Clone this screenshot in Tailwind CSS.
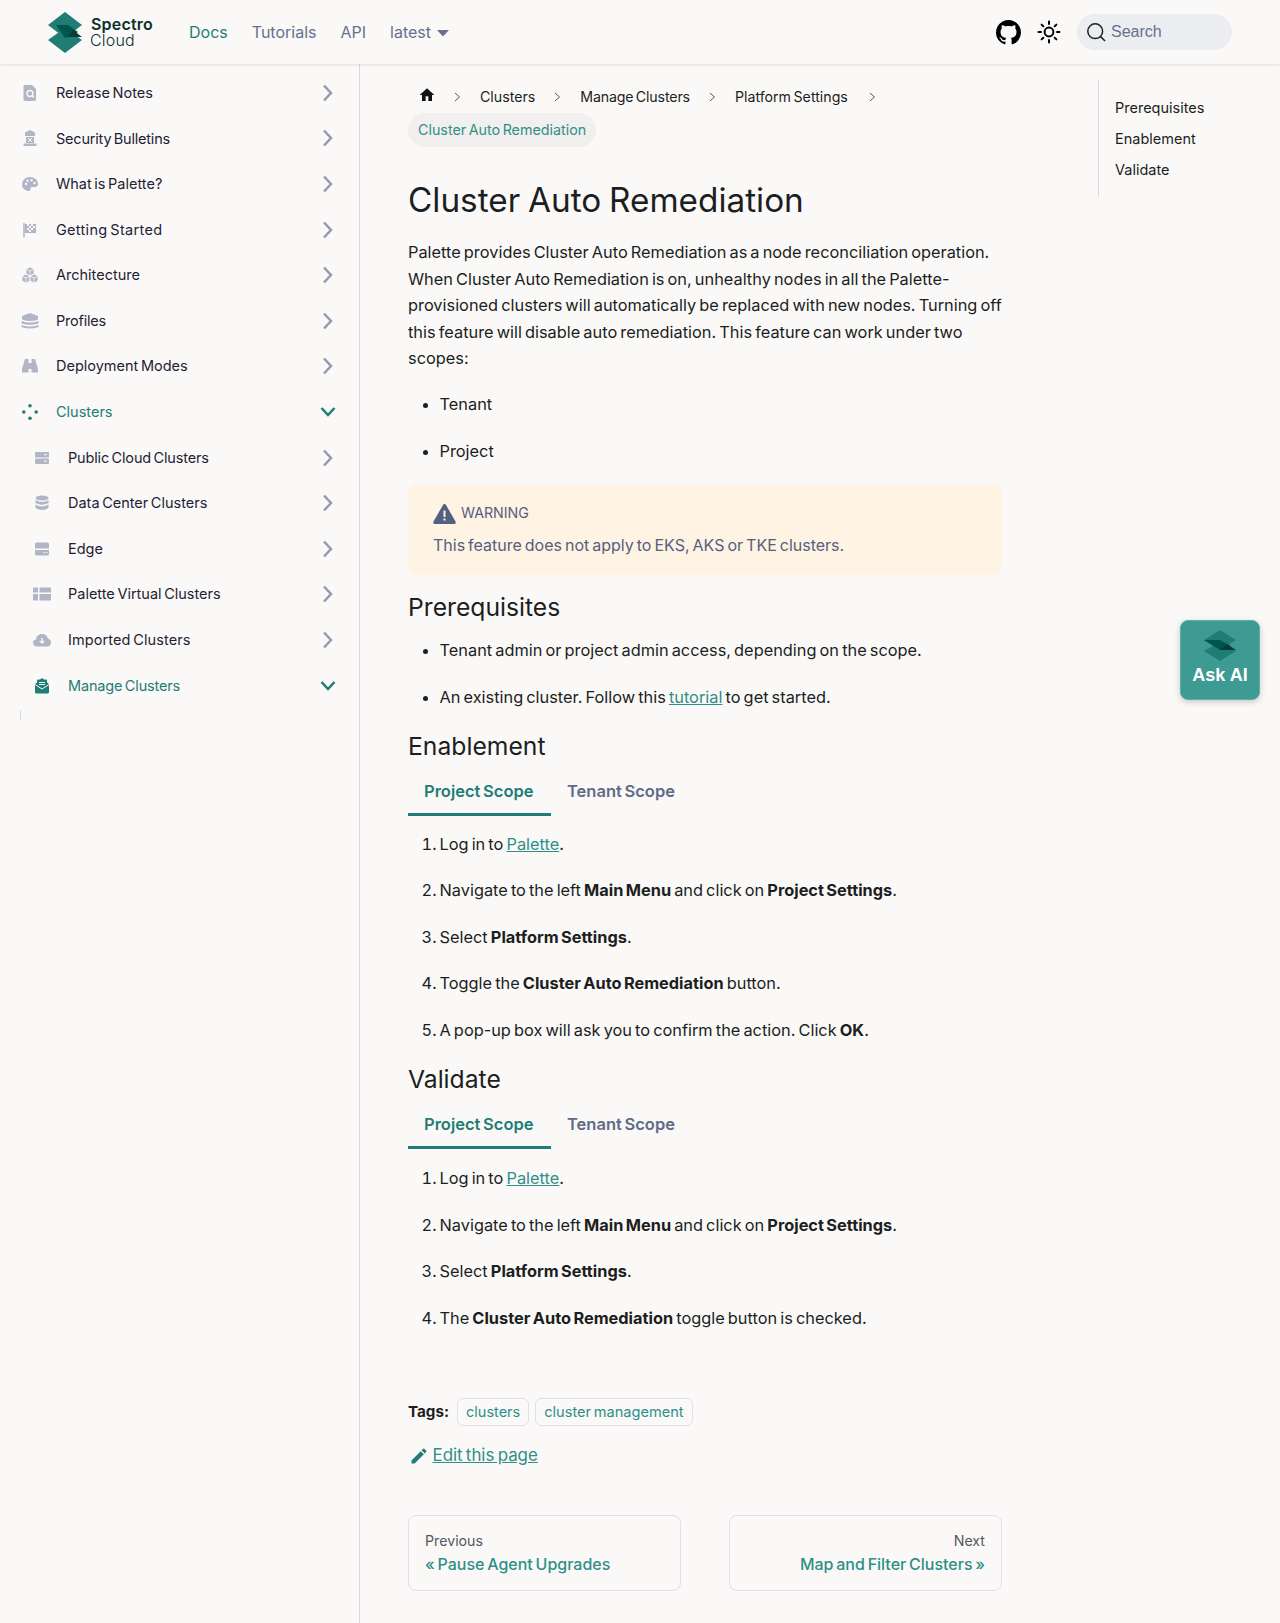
<!DOCTYPE html>
<html lang="en">
<head>
  <meta charset="UTF-8">
  <title>Cluster Auto Remediation | Palette</title>
  <script src="https://cdn.jsdelivr.net/npm/@tailwindcss/browser@4"></script>
</head>
<body class="bg-[#faf9f8] font-['Inter',sans-serif] text-[#1c1e21] h-[1623px] overflow-hidden relative">
  <!-- navbar -->
  <header class="h-[64px] flex items-center pl-[48px] pr-[48px] shadow-[0_1px_3px_rgba(0,0,0,0.1)] relative z-10">
    <svg width="34" height="41" viewBox="0 0 34 41" class="shrink-0">
      <path d="M17 16 34 28 17 41 0 28Z" fill="#1f7d75"/>
      <path d="M17 0 34 13 17 26 0 13Z" fill="#1f7d75"/>
      <path d="M8 13H20L30 20 24 24 17 26Z" fill="#00564f"/>
      <path d="M25 18 34 25 20 25Z" fill="#0b3b38"/>
    </svg>
    <div class="ml-[9px] flex flex-col text-[16px] leading-[16px] text-[#0d2f2d] w-[64px] tracking-[0.2px]">
      <span class="font-semibold">Spectro</span>
      <span class="ml-[-1px] font-light">Cloud</span>
    </div>
    <nav class="flex items-center text-[16px] text-[#67708f] ml-[34px] gap-[24px]">
      <a class="text-[#1f7d75]">Docs</a>
      <a>Tutorials</a>
      <a>API</a>
      <a class="flex items-center gap-[6px]">latest
        <svg width="12" height="7" viewBox="0 0 12 7" class="mt-[2px]"><path d="M0 0H12L6 6.5Z" fill="#67708f"/></svg>
      </a>
    </nav>
    <div class="ml-auto flex items-center">
      <svg width="25" height="25" viewBox="0 0 16 16" fill="#000"><path d="M8 0C3.58 0 0 3.58 0 8c0 3.54 2.29 6.53 5.47 7.59.4.07.55-.17.55-.38 0-.19-.01-.82-.01-1.49-2.01.37-2.53-.49-2.69-.94-.09-.23-.48-.94-.82-1.13-.28-.15-.68-.52-.01-.53.63-.01 1.08.58 1.23.82.72 1.21 1.87.87 2.33.66.07-.52.28-.87.51-1.07-1.78-.2-3.64-.89-3.64-3.95 0-.87.31-1.59.82-2.15-.08-.2-.36-1.02.08-2.12 0 0 .67-.21 2.2.82.64-.18 1.32-.27 2-.27s1.36.09 2 .27c1.53-1.04 2.2-.82 2.2-.82.44 1.1.16 1.92.08 2.12.51.56.82 1.27.82 2.15 0 3.07-1.87 3.75-3.65 3.95.29.25.54.73.54 1.48 0 1.07-.01 1.93-.01 2.2 0 .21.15.46.55.38A8.01 8.01 0 0 0 16 8c0-4.42-3.58-8-8-8Z"/></svg>
      <svg width="24" height="24" viewBox="0 0 24 24" fill="none" stroke="#000" stroke-width="2" stroke-linecap="round" class="ml-[16px]"><circle cx="12" cy="12" r="4.4"/><path d="M12 1.5v2.5M12 20v2.5M1.5 12H4M20 12h2.5M4.600 4.600l1.700 1.700M17.700 17.700l1.700 1.700M4.600 19.400l1.700-1.700M17.700 6.300l1.700-1.700"/></svg>
      <div class="ml-[16px] w-[155px] h-[36px] rounded-full bg-[#ebedf1] flex items-center pl-[9px] gap-[5px] font-['Liberation_Sans',sans-serif] text-[16px] text-[#67708f]">
        <svg width="20" height="20" viewBox="0 0 20 20" fill="none" stroke="#1c1e21" stroke-width="1.5"><circle cx="9.2" cy="9.2" r="7.4"/><path d="M14.6 14.6 19 19"/></svg>
        Search
      </div>
    </div>
  </header>

  <div class="flex h-[1559px]">
    <!-- sidebar -->
    <aside class="w-[360px] shrink-0 border-r border-[#d6d8e2] pt-[6px] text-[14.5px] text-[#1f2233] [word-spacing:-1.5px]">
      <ul class="flex flex-col">
        <li class="h-[45.6px] flex items-center pl-[22px] pr-[26px]">
          <svg class="w-[16px] h-[16px] mr-[18px] shrink-0" viewBox="0 0 16 16" fill="#b1b5c6"><path d="M3 0H10L14 4V14.500Q14 16 12.500 16H3Q1.500 16 1.500 14.500V1.500Q1.500 0 3 0Z"/><circle cx="8" cy="8.500" r="3" fill="none" stroke="#faf9f8" stroke-width="1.400"/><path d="M10 10.500 12 12.500" stroke="#faf9f8" stroke-width="1.400"/></svg>
          <span class="flex-1">Release Notes</span>
          <svg width="11" height="18" viewBox="0 0 11 18" fill="none" stroke="#9599ae" stroke-width="2.500"><path d="M2 1.500 9 9 2 16.500"/></svg>
        </li>
        <li class="h-[45.6px] flex items-center pl-[22px] pr-[26px]">
          <svg class="w-[16px] h-[16px] mr-[18px] shrink-0" viewBox="0 0 16 16" fill="#b1b5c6"><path d="M8 0 13 2.500V6H3V2.500ZM4 7H12V13H4ZM1.500 13.500H14.500V16H1.500Z"/><path d="M6 8 10 12M10 8 6 12" stroke="#faf9f8"/></svg>
          <span class="flex-1 tracking-[-0.2px]">Security Bulletins</span>
          <svg width="11" height="18" viewBox="0 0 11 18" fill="none" stroke="#9599ae" stroke-width="2.500"><path d="M2 1.500 9 9 2 16.500"/></svg>
        </li>
        <li class="h-[45.6px] flex items-center pl-[22px] pr-[26px]">
          <svg class="w-[16px] h-[16px] mr-[18px] shrink-0" viewBox="0 0 16 16" fill="#b1b5c6"><path d="M8 1C3.500 1 0 4.500 0 8.500 0 12.500 3.500 15 7 15 9 15 8 13 8.500 12 9 10.500 11 11 13 11 15 11 16 9.500 16 8 16 4 12.500 1 8 1Z"/><circle cx="4" cy="8" r="1.200" fill="#faf9f8"/><circle cx="5.500" cy="4.800" r="1.200" fill="#faf9f8"/><circle cx="9.500" cy="4.200" r="1.200" fill="#faf9f8"/><circle cx="12.500" cy="7" r="1.200" fill="#faf9f8"/></svg>
          <span class="flex-1">What is Palette?</span>
          <svg width="11" height="18" viewBox="0 0 11 18" fill="none" stroke="#9599ae" stroke-width="2.500"><path d="M2 1.500 9 9 2 16.500"/></svg>
        </li>
        <li class="h-[45.6px] flex items-center pl-[22px] pr-[26px]">
          <svg class="w-[16px] h-[16px] mr-[18px] shrink-0" viewBox="0 0 16 16"><path d="M2 1V15.500" stroke="#b1b5c6" stroke-width="1.500"/><path d="M3 2H14V11H3Z" fill="#b1b5c6"/><path d="M5 2H7V4H5ZM9 2H11V4H9ZM7 4H9V6H7ZM11 4H13V6H11ZM5 6H7V8H5ZM9 6H11V8H9ZM7 8H9V10H7Z" fill="#faf9f8"/></svg>
          <span class="flex-1 tracking-[0.3px]">Getting Started</span>
          <svg width="11" height="18" viewBox="0 0 11 18" fill="none" stroke="#9599ae" stroke-width="2.500"><path d="M2 1.500 9 9 2 16.500"/></svg>
        </li>
        <li class="h-[45.6px] flex items-center pl-[22px] pr-[26px]">
          <svg class="w-[16px] h-[16px] mr-[18px] shrink-0" viewBox="0 0 16 16" fill="#b1b5c6" stroke="#faf9f8" stroke-width="0.800"><path d="M8 0 12 2V7L8 9 4 7V2ZM4 7 8 9V14L4 16 0 14V9ZM12 7 16 9V14L12 16 8 14V9Z"/><path d="M4 2 8 4 12 2M8 4V9M0 9 4 11 8 9M4 11V16M8 9 12 11 16 9M12 11V16" fill="none"/></svg>
          <span class="flex-1">Architecture</span>
          <svg width="11" height="18" viewBox="0 0 11 18" fill="none" stroke="#9599ae" stroke-width="2.500"><path d="M2 1.500 9 9 2 16.500"/></svg>
        </li>
        <li class="h-[45.6px] flex items-center pl-[22px] pr-[26px]">
          <svg class="w-[16px] h-[16px] mr-[18px] shrink-0 overflow-visible" viewBox="0 0 16 16" fill="#b1b5c6"><path d="M8 0 16 3V6.500Q8 9.500 0 6.500V3Z"/><path d="M-.5 8Q8 11 16.500 8V10.500Q8 13 -.5 10.500ZM-.5 12Q8 15 16.500 12V14Q8 17 -.5 14Z"/></svg>
          <span class="flex-1 tracking-[-0.2px]">Profiles</span>
          <svg width="11" height="18" viewBox="0 0 11 18" fill="none" stroke="#9599ae" stroke-width="2.500"><path d="M2 1.500 9 9 2 16.500"/></svg>
        </li>
        <li class="h-[45.6px] flex items-center pl-[22px] pr-[26px]">
          <svg class="w-[16px] h-[16px] mr-[18px] shrink-0" viewBox="0 0 16 16" fill="#b1b5c6"><path d="M3 1H6.500V5H9.500V1H13L16 11V14.500H9.500V11H6.500V14.500H0V11Z"/></svg>
          <span class="flex-1">Deployment Modes</span>
          <svg width="11" height="18" viewBox="0 0 11 18" fill="none" stroke="#9599ae" stroke-width="2.500"><path d="M2 1.500 9 9 2 16.500"/></svg>
        </li>
        <li class="h-[45.6px] flex items-center pl-[22px] pr-[26px] text-[#1f7d75]">
          <svg class="w-[16px] h-[16px] mr-[18px] shrink-0" viewBox="0 0 16 16" fill="#1f7d75"><circle cx="8" cy="1.800" r="1.800"/><circle cx="1.800" cy="8" r="1.800"/><circle cx="14.200" cy="8" r="1.800"/><circle cx="8" cy="14.200" r="1.800"/></svg>
          <span class="flex-1">Clusters</span>
          <svg class="mr-[-3px]" width="16" height="11" viewBox="0 0 16 11" fill="none" stroke="#1f7d75" stroke-width="2.500"><path d="M1.500 2 8 9 14.500 2"/></svg>
        </li>
        <li class="h-[45.6px] flex items-center pl-[34px] pr-[26px]">
          <svg class="w-[16px] h-[16px] mr-[18px] shrink-0" viewBox="0 0 16 16" fill="#b1b5c6"><rect x="1" y="2" width="14" height="5.500" rx="1.200"/><rect x="1" y="8.500" width="14" height="5.500" rx="1.200"/><path d="M10 4.700h3M10 11.200h3" stroke="#faf9f8"/></svg>
          <span class="flex-1 tracking-[-0.15px]">Public Cloud Clusters</span>
          <svg width="11" height="18" viewBox="0 0 11 18" fill="none" stroke="#9599ae" stroke-width="2.500"><path d="M2 1.500 9 9 2 16.500"/></svg>
        </li>
        <li class="h-[45.6px] flex items-center pl-[34px] pr-[26px]">
          <svg class="w-[16px] h-[16px] mr-[18px] shrink-0" viewBox="0 0 16 16" fill="#b1b5c6"><ellipse cx="8" cy="3" rx="6.500" ry="2.500"/><path d="M1.500 5Q8 9 14.500 5V8Q8 11.500 1.500 8ZM1.500 9.500Q8 13.500 14.500 9.500V13Q8 17 1.500 13Z"/></svg>
          <span class="flex-1">Data Center Clusters</span>
          <svg width="11" height="18" viewBox="0 0 11 18" fill="none" stroke="#9599ae" stroke-width="2.500"><path d="M2 1.500 9 9 2 16.500"/></svg>
        </li>
        <li class="h-[45.6px] flex items-center pl-[34px] pr-[26px]">
          <svg class="w-[16px] h-[16px] mr-[18px] shrink-0" viewBox="0 0 16 16" fill="#b1b5c6"><path d="M2.500 1.500H13.500Q15 1.500 15 3V7.500H1V3Q1 1.500 2.500 1.500ZM1 9H15V13Q15 14.500 13.500 14.500H2.500Q1 14.500 1 13Z"/><path d="M9.500 11.500h1.500M12 11.500h1.500" stroke="#faf9f8"/></svg>
          <span class="flex-1">Edge</span>
          <svg width="11" height="18" viewBox="0 0 11 18" fill="none" stroke="#9599ae" stroke-width="2.500"><path d="M2 1.500 9 9 2 16.500"/></svg>
        </li>
        <li class="h-[45.6px] flex items-center pl-[34px] pr-[26px]">
          <svg class="w-[18px] h-[16px] ml-[-1px] mr-[17px] shrink-0" viewBox="0 0 18 16" fill="#b1b5c6"><path d="M0 1.500H5V6.500H0ZM6.500 1.500H18V6.500H6.500ZM0 8H5V14.500H0ZM6.500 8H18V14.500H6.500Z"/></svg>
          <span class="flex-1">Palette Virtual Clusters</span>
          <svg width="11" height="18" viewBox="0 0 11 18" fill="none" stroke="#9599ae" stroke-width="2.500"><path d="M2 1.500 9 9 2 16.500"/></svg>
        </li>
        <li class="h-[45.6px] flex items-center pl-[34px] pr-[26px]">
          <svg class="w-[18px] h-[16px] ml-[-1px] mr-[17px] shrink-0" viewBox="0 0 18 16" fill="#b1b5c6"><path d="M4 14.500Q0 14.500 0 10.800 0 8 3 7.500 3.500 2 9.500 2 13.500 2 15 6.500 18 7.500 18 10.500 18 14.500 14 14.500Z"/><path d="M9 6V11M6.800 9 9 11.200 11.200 9" fill="none" stroke="#faf9f8" stroke-width="1.300"/></svg>
          <span class="flex-1 tracking-[0.1px]">Imported Clusters</span>
          <svg width="11" height="18" viewBox="0 0 11 18" fill="none" stroke="#9599ae" stroke-width="2.500"><path d="M2 1.500 9 9 2 16.500"/></svg>
        </li>
        <li class="h-[45.6px] flex items-center pl-[34px] pr-[26px] text-[#1f7d75]">
          <svg class="w-[16px] h-[16px] mr-[18px] shrink-0" viewBox="0 0 16 16" fill="#1f7d75"><path d="M1 6 3 4.500V2.500Q3 1.500 4 1.500H6L8 0 10 1.500H12Q13 1.500 13 2.500V4.500L15 6V14Q15 15.500 13.500 15.500H2.500Q1 15.500 1 14Z"/><path d="M1 6.500 8 11 15 6.500" fill="none" stroke="#faf9f8"/><path d="M5 4.500h6M5 6.500h6" stroke="#faf9f8"/></svg>
          <span class="flex-1 tracking-[-0.15px]">Manage Clusters</span>
          <svg class="mr-[-3px]" width="16" height="11" viewBox="0 0 16 11" fill="none" stroke="#1f7d75" stroke-width="2.500"><path d="M1.500 2 8 9 14.500 2"/></svg>
        </li>
      </ul>
      <div class="ml-[20px] mt-[2px] w-px h-[10px] bg-[#d6d8e2]"></div>
    </aside>

    <!-- article -->
    <main class="w-[594px] ml-[48px] shrink-0 text-[16.35px] leading-[26.6px] [word-spacing:-1.5px]">
      <nav class="pt-[18px] flex flex-wrap items-center text-[14.2px] leading-[30px]">
        <svg width="16" height="16" viewBox="0 0 24 24" fill="#111" class="ml-[11px] mb-[4px]"><path d="M10 21v-7h4v7h5.500v-9H23L12 2 1 12h3.500v9Z"/></svg>
        <svg width="7" height="10" viewBox="0 0 7 10" fill="none" stroke="#555" class="ml-[19px]"><path d="M1 1 5.500 5 1 9"/></svg>
        <span class="ml-[19px]">Clusters</span>
        <svg width="7" height="10" viewBox="0 0 7 10" fill="none" stroke="#555" class="ml-[19px]"><path d="M1 1 5.500 5 1 9"/></svg>
        <span class="ml-[19px] tracking-[-0.15px]">Manage Clusters</span>
        <svg width="7" height="10" viewBox="0 0 7 10" fill="none" stroke="#555" class="ml-[19px]"><path d="M1 1 5.500 5 1 9"/></svg>
        <span class="ml-[19px]">Platform Settings</span>
        <svg width="7" height="10" viewBox="0 0 7 10" fill="none" stroke="#555" class="ml-[21px]"><path d="M1 1 5.500 5 1 9"/></svg>
      </nav>
      <div class="mt-[1px] inline-block h-[34px] leading-[34px] px-[10px] rounded-full bg-[#f2f0ee] text-[#2f8f88] text-[14.3px]">Cluster Auto Remediation</div>

      <h1 class="mt-[31px] text-[33.3px] leading-[44px] text-[#1c1e21]">Cluster Auto Remediation</h1>
      <p class="mt-[17px]">Palette provides Cluster Auto Remediation as a node reconciliation operation. When Cluster Auto Remediation is on, unhealthy nodes in all the Palette-provisioned clusters will automatically be replaced with new nodes. Turning off this feature will disable auto remediation. This feature can work under two scopes:</p>
      <ul class="list-disc pl-[31.5px] mt-[19px]">
        <li>Tenant</li>
        <li class="mt-[20.4px]">Project</li>
      </ul>
      <div class="mt-[19px] h-[91px] rounded-[8px] bg-[#fff3e3] pl-[25px] pt-[18px] text-[#54607f] text-[16px]">
        <div class="flex items-center text-[14.200px] h-[24px]">
          <svg width="23" height="20" viewBox="0 0 23 20" fill="#54607f" class="mr-[5px]"><path d="M11.500 0Q12.500 0 13 1L22.500 17.500Q23.500 20 21 20H2Q-.5 20 .5 17.500L10 1Q10.500 0 11.500 0Z"/><path d="M10.500 6.500H12.500V13H10.500ZM10.500 14.500H12.500V16.500H10.500Z" fill="#fff3e3"/></svg>
          WARNING
        </div>
        <p class="mt-[6px]">This feature does not apply to EKS, AKS or TKE clusters.</p>
      </div>
      <h2 class="mt-[16px] text-[24.700px] leading-[32px]">Prerequisites</h2>
      <ul class="list-disc pl-[31.5px] mt-[14px]">
        <li>Tenant admin or project admin access, depending on the scope.</li>
        <li class="mt-[20.4px]">An existing cluster. Follow this <a class="text-[#2f8f88] underline">tutorial</a> to get started.</li>
      </ul>
      <h2 class="mt-[19.5px] text-[24.700px] leading-[32px]">Enablement</h2>
      <div class="mt-[6px] flex font-semibold text-[#606b85] text-[16.500px] h-[48px]">
        <div class="px-[16px] w-[143px] leading-[46px] border-b-[3px] border-[#1f7d75] text-[#1f7d75]">Project Scope</div>
        <div class="px-[16px] leading-[46px]">Tenant Scope</div>
      </div>
      <ol class="list-decimal pl-[31.5px] mt-[15px]">
        <li>Log in to <a class="text-[#2f8f88] underline">Palette</a>.</li>
        <li class="mt-[20px]">Navigate to the left <b>Main Menu</b> and click on <b>Project Settings</b>.</li>
        <li class="mt-[20px]">Select <b>Platform Settings</b>.</li>
        <li class="mt-[20px]">Toggle the <b>Cluster Auto Remediation</b> button.</li>
        <li class="mt-[20px]">A pop-up box will ask you to confirm the action. Click <b>OK</b>.</li>
      </ol>
      <h2 class="mt-[19.5px] text-[24.700px] leading-[32px]">Validate</h2>
      <div class="mt-[6px] flex font-semibold text-[#606b85] text-[16.500px] h-[48px]">
        <div class="px-[16px] w-[143px] leading-[46px] border-b-[3px] border-[#1f7d75] text-[#1f7d75]">Project Scope</div>
        <div class="px-[16px] leading-[46px]">Tenant Scope</div>
      </div>
      <ol class="list-decimal pl-[31.5px] mt-[16px]">
        <li>Log in to <a class="text-[#2f8f88] underline">Palette</a>.</li>
        <li class="mt-[20px]">Navigate to the left <b>Main Menu</b> and click on <b>Project Settings</b>.</li>
        <li class="mt-[20px]">Select <b>Platform Settings</b>.</li>
        <li class="mt-[20px]">The <b>Cluster Auto Remediation</b> toggle button is checked.</li>
      </ol>
      <div class="mt-[66.5px] flex items-center h-[28px]">
        <b class="mr-[8px] text-[15.200px]">Tags:</b>
        <span class="h-[28px] leading-[26px] px-[8px] border border-[#dfe0e8] rounded-[6px] text-[14.500px] text-[#2f8f88]">clusters</span>
        <span class="ml-[6px] h-[28px] leading-[26px] px-[8px] border border-[#dfe0e8] rounded-[6px] text-[14.600px] text-[#2f8f88]">cluster management</span>
      </div>
      <div class="mt-[16.5px] flex items-center">
        <svg width="20" height="20" viewBox="0 0 24 24" fill="#1f7d75" class="ml-[1px] mr-[3.5px]"><path d="M3 17.250V21h3.750L17.810 9.940l-3.750-3.750L3 17.250ZM20.710 7.040a1 1 0 0 0 0-1.410l-2.340-2.340a1 1 0 0 0-1.410 0l-1.830 1.830 3.750 3.750 1.830-1.830Z"/></svg>
        <a class="text-[#2f8f88] underline text-[16.9px]">Edit this page</a>
      </div>
      <div class="mt-[46px] grid grid-cols-2 gap-[48px]">
        <div class="h-[76px] rounded-[8px] border border-[#dfe0e8] px-[16px] pt-[14px]">
          <div class="text-[14.200px] leading-[22px] text-[#525860]">Previous</div>
          <div class="text-[16px] leading-[24px] text-[#2f8f88] font-medium">« Pause Agent Upgrades</div>
        </div>
        <div class="h-[76px] rounded-[8px] border border-[#dfe0e8] px-[16px] pt-[14px] text-right">
          <div class="text-[14.200px] leading-[22px] text-[#525860]">Next</div>
          <div class="text-[16px] leading-[24px] text-[#2f8f88] font-medium">Map and Filter Clusters »</div>
        </div>
      </div>
    </main>

    <!-- table of contents -->
    <div class="ml-[96px] mt-[16px] h-[117px] border-l border-[#d6d8e2] pl-[16px] pt-[12px] text-[14.500px] leading-[31px] [word-spacing:-1.5px]">
      <div>Prerequisites</div>
      <div>Enablement</div>
      <div>Validate</div>
    </div>
  </div>

  <!-- ask ai floating button -->
  <div class="absolute left-[1180px] top-[620px] w-[80px] h-[80px] rounded-[8px] border border-[#5cb0aa] bg-[#3e9b94] shadow-[0_2px_6px_rgba(0,0,0,0.2)] flex flex-col items-center pt-[9px]">
    <svg width="34" height="31" viewBox="0 0 34 31">
      <path d="M17 12 33 21 17 31 1 21Z" fill="#1f7d75"/>
      <path d="M17 0 33 10 17 20 1 10Z" fill="#1f7d75"/>
      <path d="M1 10H17L28 16 17 20Z" fill="#00564f"/>
      <path d="M24 14 33 20H17Z" fill="#0b3b38"/>
    </svg>
    <span class="font-['Liberation_Sans',sans-serif] font-bold text-[18px] leading-[20px] text-white mt-[4px] whitespace-nowrap">Ask AI</span>
  </div>
</body>
</html>
